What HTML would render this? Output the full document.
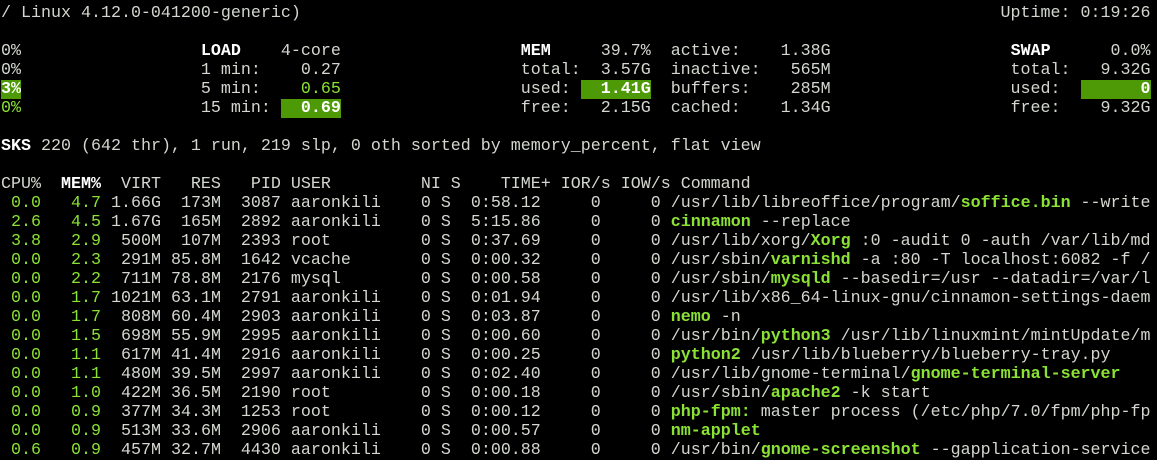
<!DOCTYPE html>
<html><head><meta charset="utf-8"><style>
html,body{margin:0;padding:0;background:#000;width:1157px;height:460px;overflow:hidden}
pre{margin:0;padding:4px 0 0 1px;font-family:"Liberation Mono",monospace;font-size:16.67px;line-height:19px;color:#d3d7cf;white-space:pre}
.g{color:#8ae234}
.gb{color:#8ae234;font-weight:bold}
.b{color:#fff;font-weight:bold}
.bg{background:#4e9a06;color:#fff;font-weight:bold}
</style></head><body><pre>/ Linux 4.12.0-041200-generic)                                                                      Uptime: 0:19:26

0%                  <span class="b">LOAD</span>    4-core                  <span class="b">MEM</span>     39.7%  active:    1.38G                  <span class="b">SWAP</span>      0.0%
0%                  1 min:    0.27                  total:  3.57G  inactive:   565M                  total:   9.32G
<span class="bg">3%</span>                  5 min:    <span class="g">0.65</span>                  used: <span class="bg">  1.41G</span>  buffers:    285M                  used:  <span class="bg">      0</span>
<span class="g">0%</span>                  15 min: <span class="bg">  0.69</span>                  free:   2.15G  cached:    1.34G                  free:    9.32G

<span class="b">SKS</span> 220 (642 thr), 1 run, 219 slp, 0 oth sorted by memory_percent, flat view

CPU%  <span class="b">MEM%</span>  VIRT   RES   PID USER         NI S    TIME+ IOR/s IOW/s Command
 <span class="g">0.0</span>   <span class="g">4.7</span> 1.66G  173M  3087 aaronkili    0 S  0:58.12     0     0 /usr/lib/libreoffice/program/<span class="gb">soffice.bin</span> --write
 <span class="g">2.6</span>   <span class="g">4.5</span> 1.67G  165M  2892 aaronkili    0 S  5:15.86     0     0 <span class="gb">cinnamon</span> --replace
 <span class="g">3.8</span>   <span class="g">2.9</span>  500M  107M  2393 root         0 S  0:37.69     0     0 /usr/lib/xorg/<span class="gb">Xorg</span> :0 -audit 0 -auth /var/lib/md
 <span class="g">0.0</span>   <span class="g">2.3</span>  291M 85.8M  1642 vcache       0 S  0:00.32     0     0 /usr/sbin/<span class="gb">varnishd</span> -a :80 -T localhost:6082 -f /
 <span class="g">0.0</span>   <span class="g">2.2</span>  711M 78.8M  2176 mysql        0 S  0:00.58     0     0 /usr/sbin/<span class="gb">mysqld</span> --basedir=/usr --datadir=/var/l
 <span class="g">0.0</span>   <span class="g">1.7</span> 1021M 63.1M  2791 aaronkili    0 S  0:01.94     0     0 /usr/lib/x86_64-linux-gnu/cinnamon-settings-daem
 <span class="g">0.0</span>   <span class="g">1.7</span>  808M 60.4M  2903 aaronkili    0 S  0:03.87     0     0 <span class="gb">nemo</span> -n
 <span class="g">0.0</span>   <span class="g">1.5</span>  698M 55.9M  2995 aaronkili    0 S  0:00.60     0     0 /usr/bin/<span class="gb">python3</span> /usr/lib/linuxmint/mintUpdate/m
 <span class="g">0.0</span>   <span class="g">1.1</span>  617M 41.4M  2916 aaronkili    0 S  0:00.25     0     0 <span class="gb">python2</span> /usr/lib/blueberry/blueberry-tray.py
 <span class="g">0.0</span>   <span class="g">1.1</span>  480M 39.5M  2997 aaronkili    0 S  0:02.40     0     0 /usr/lib/gnome-terminal/<span class="gb">gnome-terminal-server</span>
 <span class="g">0.0</span>   <span class="g">1.0</span>  422M 36.5M  2190 root         0 S  0:00.18     0     0 /usr/sbin/<span class="gb">apache2</span> -k start
 <span class="g">0.0</span>   <span class="g">0.9</span>  377M 34.3M  1253 root         0 S  0:00.12     0     0 <span class="gb">php-fpm:</span> master process (/etc/php/7.0/fpm/php-fp
 <span class="g">0.0</span>   <span class="g">0.9</span>  513M 33.6M  2906 aaronkili    0 S  0:00.57     0     0 <span class="gb">nm-applet</span>
 <span class="g">0.6</span>   <span class="g">0.9</span>  457M 32.7M  4430 aaronkili    0 S  0:00.88     0     0 /usr/bin/<span class="gb">gnome-screenshot</span> --gapplication-service
</pre></body></html>
